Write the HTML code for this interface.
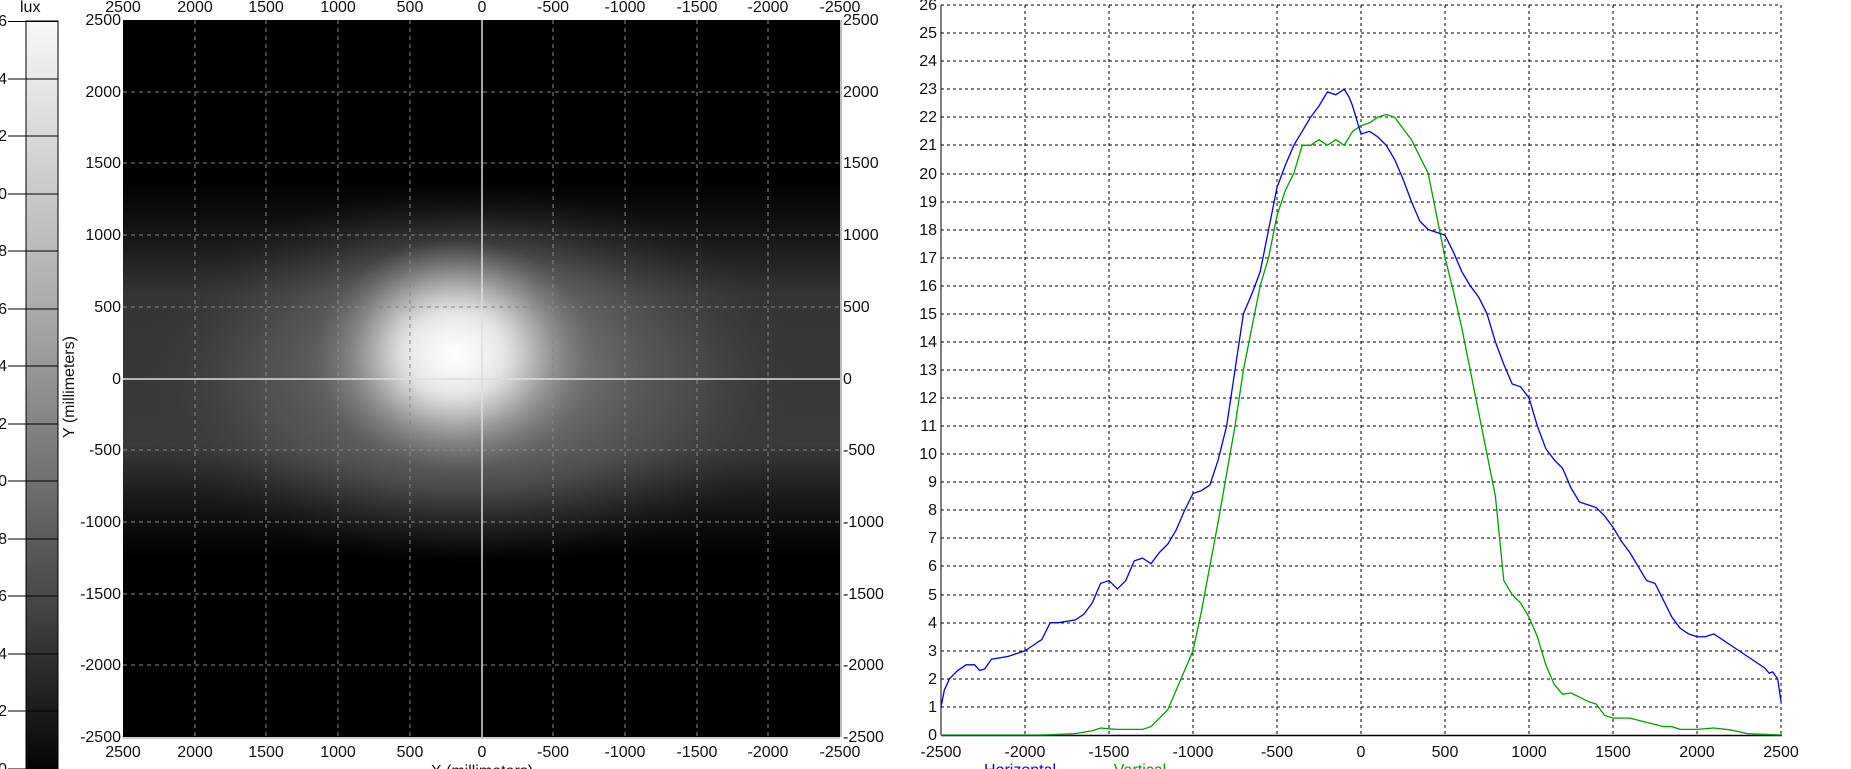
<!DOCTYPE html>
<html><head><meta charset="utf-8"><style>
html,body{margin:0;padding:0;background:#fff;width:1851px;height:769px;overflow:hidden}
svg text{font-family:"Liberation Sans",sans-serif;font-size:16px;fill:#111}
</style></head><body>
<svg width="1851" height="769" viewBox="0 0 1851 769" xmlns="http://www.w3.org/2000/svg">
<defs>
<linearGradient id="cb" x1="0" y1="0" x2="0" y2="1">
<stop offset="0" stop-color="#f8f8f8"/><stop offset="0.4" stop-color="#a6a6a6"/><stop offset="0.75" stop-color="#4a4a4a"/><stop offset="1" stop-color="#000"/>
</linearGradient>
<radialGradient id="core" cx="0.5" cy="0.5" r="0.5">
<stop offset="0" stop-color="#fff" stop-opacity="1"/><stop offset="0.35" stop-color="#ddd" stop-opacity="0.9"/><stop offset="1" stop-color="#888" stop-opacity="0"/>
</radialGradient>
<radialGradient id="halo" cx="0.5" cy="0.5" r="0.5">
<stop offset="0" stop-color="#999" stop-opacity="0.9"/><stop offset="0.6" stop-color="#666" stop-opacity="0.6"/><stop offset="1" stop-color="#333" stop-opacity="0"/>
</radialGradient>
<linearGradient id="band" x1="0" y1="0" x2="0" y2="1">
<stop offset="0" stop-color="#2a2a2a" stop-opacity="0"/><stop offset="0.3" stop-color="#3a3a3a" stop-opacity="0.9"/><stop offset="0.7" stop-color="#404040" stop-opacity="0.9"/><stop offset="1" stop-color="#2a2a2a" stop-opacity="0"/>
</linearGradient>
<filter id="bl" x="-50%" y="-50%" width="200%" height="200%"><feGaussianBlur stdDeviation="25"/></filter>
<clipPath id="cp"><rect x="123" y="20" width="717" height="717"/></clipPath>
</defs>

<!-- colorbar -->
<text x="20" y="12">lux</text>
<rect x="26" y="21" width="32" height="760" fill="url(#cb)" stroke="#000" stroke-width="1"/>
<g stroke="#000" stroke-width="1">
<line x1="8" y1="21.5" x2="58" y2="21.5"/><line x1="8" y1="79" x2="58" y2="79"/><line x1="8" y1="136" x2="58" y2="136"/><line x1="8" y1="194" x2="58" y2="194"/><line x1="8" y1="251" x2="58" y2="251"/><line x1="8" y1="309" x2="58" y2="309"/><line x1="8" y1="366" x2="58" y2="366"/><line x1="8" y1="424" x2="58" y2="424"/><line x1="8" y1="481" x2="58" y2="481"/><line x1="8" y1="539" x2="58" y2="539"/><line x1="8" y1="596" x2="58" y2="596"/><line x1="8" y1="654" x2="58" y2="654"/><line x1="8" y1="711" x2="58" y2="711"/><line x1="8" y1="769" x2="58" y2="769"/>
</g>
<g text-anchor="end">
<text x="7" y="26">6</text><text x="7" y="84">4</text><text x="7" y="141">2</text><text x="7" y="199">0</text><text x="7" y="256">8</text><text x="7" y="314">6</text><text x="7" y="371">4</text><text x="7" y="429">2</text><text x="7" y="486">0</text><text x="7" y="544">8</text><text x="7" y="601">6</text><text x="7" y="659">4</text><text x="7" y="716">2</text><text x="7" y="774">0</text>
</g>
<text transform="translate(74,387) rotate(-90)" text-anchor="middle">Y (millimeters)</text>

<!-- left image -->
<rect x="123" y="20" width="717" height="717" fill="#000"/>
<g clip-path="url(#cp)">
<rect x="123" y="180" width="717" height="380" fill="url(#band)"/>
<ellipse cx="470" cy="375" rx="340" ry="190" fill="url(#halo)"/>
<ellipse cx="470" cy="365" rx="230" ry="150" fill="url(#halo)"/>
<ellipse cx="455" cy="355" rx="140" ry="115" fill="url(#core)"/>
<ellipse cx="455" cy="348" rx="70" ry="60" fill="#fff" opacity="0.55" filter="url(#bl)"/>
</g>
<g stroke="#888" stroke-width="1" stroke-dasharray="4,4">
<line x1="195" y1="20" x2="195" y2="737"/><line x1="266" y1="20" x2="266" y2="737"/><line x1="338" y1="20" x2="338" y2="737"/><line x1="410" y1="20" x2="410" y2="737"/><line x1="553" y1="20" x2="553" y2="737"/><line x1="625" y1="20" x2="625" y2="737"/><line x1="697" y1="20" x2="697" y2="737"/><line x1="768" y1="20" x2="768" y2="737"/>
<line x1="123" y1="92" x2="840" y2="92"/><line x1="123" y1="163" x2="840" y2="163"/><line x1="123" y1="235" x2="840" y2="235"/><line x1="123" y1="307" x2="840" y2="307"/><line x1="123" y1="450" x2="840" y2="450"/><line x1="123" y1="522" x2="840" y2="522"/><line x1="123" y1="594" x2="840" y2="594"/><line x1="123" y1="665" x2="840" y2="665"/>
</g>
<line x1="482" y1="20" x2="482" y2="737" stroke="#ddd" stroke-width="1.5"/>
<line x1="123" y1="379" x2="840" y2="379" stroke="#ddd" stroke-width="1.5"/>
<line x1="841" y1="20" x2="841" y2="737" stroke="#bbb" stroke-width="2"/>
<line x1="123" y1="738" x2="840" y2="738" stroke="#ccc" stroke-width="2"/>
<g text-anchor="middle">
<text x="123" y="12">2500</text><text x="195" y="12">2000</text><text x="266" y="12">1500</text><text x="338" y="12">1000</text><text x="410" y="12">500</text><text x="482" y="12">0</text><text x="553" y="12">-500</text><text x="625" y="12">-1000</text><text x="697" y="12">-1500</text><text x="768" y="12">-2000</text><text x="840" y="12">-2500</text>
<text x="123" y="757">2500</text><text x="195" y="757">2000</text><text x="266" y="757">1500</text><text x="338" y="757">1000</text><text x="410" y="757">500</text><text x="482" y="757">0</text><text x="553" y="757">-500</text><text x="625" y="757">-1000</text><text x="697" y="757">-1500</text><text x="768" y="757">-2000</text><text x="840" y="757">-2500</text>
<text x="482" y="776">X (millimeters)</text>
</g>
<g text-anchor="end">
<text x="121" y="25">2500</text><text x="121" y="97">2000</text><text x="121" y="168">1500</text><text x="121" y="240">1000</text><text x="121" y="312">500</text><text x="121" y="384">0</text><text x="121" y="455">-500</text><text x="121" y="527">-1000</text><text x="121" y="599">-1500</text><text x="121" y="670">-2000</text><text x="121" y="742">-2500</text>
</g>
<g>
<text x="843" y="25">2500</text><text x="843" y="97">2000</text><text x="843" y="168">1500</text><text x="843" y="240">1000</text><text x="843" y="312">500</text><text x="843" y="384">0</text><text x="843" y="455">-500</text><text x="843" y="527">-1000</text><text x="843" y="599">-1500</text><text x="843" y="670">-2000</text><text x="843" y="742">-2500</text>
</g>

<!-- right chart -->
<g stroke="#000" stroke-width="1" stroke-dasharray="3,3">
<line x1="941" y1="5" x2="1781" y2="5"/>
<line x1="1781" y1="5" x2="1781" y2="735"/>
<line x1="1025" y1="5" x2="1025" y2="735"/><line x1="1109" y1="5" x2="1109" y2="735"/><line x1="1193" y1="5" x2="1193" y2="735"/><line x1="1277" y1="5" x2="1277" y2="735"/><line x1="1361" y1="5" x2="1361" y2="735"/><line x1="1445" y1="5" x2="1445" y2="735"/><line x1="1529" y1="5" x2="1529" y2="735"/><line x1="1613" y1="5" x2="1613" y2="735"/><line x1="1697" y1="5" x2="1697" y2="735"/>
<line x1="941" y1="33" x2="1781" y2="33"/><line x1="941" y1="61" x2="1781" y2="61"/><line x1="941" y1="89" x2="1781" y2="89"/><line x1="941" y1="117" x2="1781" y2="117"/><line x1="941" y1="145" x2="1781" y2="145"/><line x1="941" y1="174" x2="1781" y2="174"/><line x1="941" y1="202" x2="1781" y2="202"/><line x1="941" y1="230" x2="1781" y2="230"/><line x1="941" y1="258" x2="1781" y2="258"/><line x1="941" y1="286" x2="1781" y2="286"/><line x1="941" y1="314" x2="1781" y2="314"/><line x1="941" y1="342" x2="1781" y2="342"/><line x1="941" y1="370" x2="1781" y2="370"/><line x1="941" y1="398" x2="1781" y2="398"/><line x1="941" y1="426" x2="1781" y2="426"/><line x1="941" y1="454" x2="1781" y2="454"/><line x1="941" y1="482" x2="1781" y2="482"/><line x1="941" y1="510" x2="1781" y2="510"/><line x1="941" y1="538" x2="1781" y2="538"/><line x1="941" y1="566" x2="1781" y2="566"/><line x1="941" y1="595" x2="1781" y2="595"/><line x1="941" y1="623" x2="1781" y2="623"/><line x1="941" y1="651" x2="1781" y2="651"/><line x1="941" y1="679" x2="1781" y2="679"/><line x1="941" y1="707" x2="1781" y2="707"/>
</g>
<line x1="941" y1="5" x2="941" y2="735" stroke="#000"/>
<line x1="941" y1="735.5" x2="1782" y2="735.5" stroke="#000" stroke-width="1.5"/>
<g transform="translate(1361,735) scale(0.168,-28.08)" fill="none" stroke-width="1.3">
<polyline vector-effect="non-scaling-stroke" stroke="#00a000" points="-2500,0 -1900,0 -1700,0.05 -1600,0.15 -1550,0.25 -1500,0.22 -1450,0.2 -1300,0.2 -1250,0.3 -1150,0.9 -1100,1.6 -1000,3 -950,4.4 -900,6 -850,7.6 -800,9.3 -750,11 -700,13 -650,14.5 -600,16 -550,17 -500,18.5 -450,19.4 -400,20 -350,21 -300,21 -250,21.2 -200,21 -150,21.2 -100,21 -50,21.5 0,21.7 50,21.8 100,22 150,22.1 200,22 250,21.6 300,21.2 350,20.6 400,20 450,18.5 500,17 550,15.8 600,14.5 650,13 700,11.5 750,10 800,8.5 850,5.5 900,5 950,4.7 1000,4.2 1050,3.5 1100,2.5 1150,1.8 1200,1.45 1250,1.5 1300,1.35 1350,1.2 1400,1.1 1450,0.7 1500,0.6 1600,0.6 1700,0.45 1800,0.3 1850,0.3 1900,0.2 2000,0.2 2100,0.25 2200,0.18 2300,0.05 2500,0"/>
<polyline vector-effect="non-scaling-stroke" stroke="#0000ee" points="-2500,1 -2480,1.6 -2450,2 -2400,2.3 -2350,2.5 -2300,2.5 -2270,2.3 -2240,2.35 -2200,2.7 -2100,2.8 -2000,3 -1950,3.2 -1900,3.4 -1850,4 -1800,4 -1700,4.1 -1650,4.3 -1600,4.7 -1550,5.4 -1500,5.5 -1450,5.2 -1400,5.5 -1350,6.2 -1300,6.3 -1250,6.1 -1200,6.5 -1150,6.8 -1100,7.3 -1050,8 -1000,8.6 -950,8.7 -900,8.9 -850,9.8 -800,11 -750,13 -700,15 -650,15.7 -600,16.5 -550,18 -500,19.5 -450,20.3 -400,21 -350,21.5 -300,22 -250,22.4 -200,22.9 -150,22.8 -100,23 -70,22.7 -50,22.4 0,21.4 50,21.5 100,21.3 150,21 200,20.5 250,19.8 300,19 350,18.3 400,18 450,17.9 500,17.8 550,17.2 600,16.5 650,16 700,15.6 750,15 800,14 850,13.2 900,12.5 950,12.4 1000,12 1050,11 1100,10.2 1150,9.8 1200,9.5 1250,8.8 1300,8.3 1350,8.2 1400,8.1 1450,7.8 1500,7.4 1550,6.9 1600,6.5 1650,6 1700,5.5 1750,5.4 1800,4.8 1850,4.2 1900,3.8 1950,3.6 2000,3.5 2050,3.5 2100,3.6 2150,3.4 2200,3.2 2250,3 2300,2.8 2350,2.6 2400,2.4 2430,2.2 2450,2.25 2480,2 2500,1.2"/>
</g>
<g text-anchor="end">
<text x="937" y="740">0</text><text x="937" y="712">1</text><text x="937" y="684">2</text><text x="937" y="656">3</text><text x="937" y="628">4</text><text x="937" y="600">5</text><text x="937" y="571">6</text><text x="937" y="543">7</text><text x="937" y="515">8</text><text x="937" y="487">9</text><text x="937" y="459">10</text><text x="937" y="431">11</text><text x="937" y="403">12</text><text x="937" y="375">13</text><text x="937" y="347">14</text><text x="937" y="319">15</text><text x="937" y="291">16</text><text x="937" y="263">17</text><text x="937" y="235">18</text><text x="937" y="207">19</text><text x="937" y="179">20</text><text x="937" y="150">21</text><text x="937" y="122">22</text><text x="937" y="94">23</text><text x="937" y="66">24</text><text x="937" y="38">25</text><text x="937" y="10">26</text>
</g>
<g text-anchor="middle">
<text x="941" y="757">-2500</text><text x="1025" y="757">-2000</text><text x="1109" y="757">-1500</text><text x="1193" y="757">-1000</text><text x="1277" y="757">-500</text><text x="1361" y="757">0</text><text x="1445" y="757">500</text><text x="1529" y="757">1000</text><text x="1613" y="757">1500</text><text x="1697" y="757">2000</text><text x="1781" y="757">2500</text>
<text x="1020" y="775" style="fill:#0000ee">Horizontal</text>
<text x="1140" y="775" style="fill:#00a000">Vertical</text>
</g>
</svg>
</body></html>
